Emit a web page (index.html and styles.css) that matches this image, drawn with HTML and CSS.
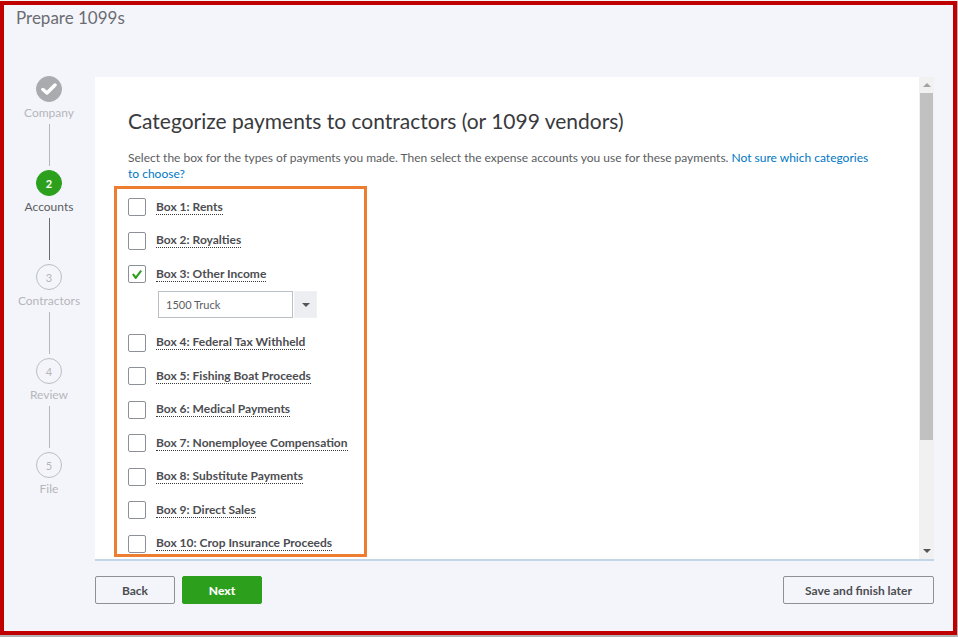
FILE: index.html
```html
<!DOCTYPE html>
<html lang="en">
    <head>
        <meta charset="UTF-8" />
        <meta name="viewport" content="width=device-width, initial-scale=1.0" />
        <title>Prepare 1099s</title>
        <link rel="stylesheet" href="styles.css">
    </head>
    <body>
        <div class="page">
            <h1 class="page-title">Prepare 1099s</h1>

            <div class="wizard">
                <!-- Steps -->
                <ol class="steps">
                    <li class="step done">
                        <span class="step-circle">
                            <svg width="16" height="14" viewBox="0 0 16 14" aria-hidden="true">
                                <path d="M2 7.5 L6 11 L14 3" fill="none" stroke="#fff" stroke-width="3.5" stroke-linecap="round" stroke-linejoin="round" />
                            </svg>
                        </span>
                        <span class="step-name">Company</span>
                    </li>
                    <li class="step current">
                        <span class="step-circle">2</span>
                        <span class="step-name">Accounts</span>
                    </li>
                    <li class="step">
                        <span class="step-circle">3</span>
                        <span class="step-name">Contractors</span>
                    </li>
                    <li class="step">
                        <span class="step-circle">4</span>
                        <span class="step-name">Review</span>
                    </li>
                    <li class="step">
                        <span class="step-circle">5</span>
                        <span class="step-name">File</span>
                    </li>
                </ol>

                <form class="main">
                    <div class="panel">
                        <div class="panel-content">
                            <h2>Categorize payments to contractors (or 1099 vendors)</h2>
                            <p class="intro">Select the box for the types of payments you made. Then select the expense accounts you use for these payments. <a href="#">Not sure which categories to choose?</a></p>

                            <!-- 1099 boxes -->
                            <div class="box-list">
                                <div class="box-item"><input type="checkbox" id="box1" /><label for="box1">Box 1: Rents</label></div>
                                <div class="box-item"><input type="checkbox" id="box2" /><label for="box2">Box 2: Royalties</label></div>
                                <div class="box-group">
                                    <div class="box-item"><input type="checkbox" id="box3" checked /><label for="box3">Box 3: Other Income</label></div>
                                    <div class="account-picker">
                                        <input type="text" value="1500 Truck" aria-label="Expense account" />
                                        <button type="button" aria-label="Show accounts"><span class="arrow-down"></span></button>
                                    </div>
                                </div>
                                <div class="box-item"><input type="checkbox" id="box4" /><label for="box4">Box 4: Federal Tax Withheld</label></div>
                                <div class="box-item"><input type="checkbox" id="box5" /><label for="box5">Box 5: Fishing Boat Proceeds</label></div>
                                <div class="box-item"><input type="checkbox" id="box6" /><label for="box6">Box 6: Medical Payments</label></div>
                                <div class="box-item"><input type="checkbox" id="box7" /><label for="box7">Box 7: Nonemployee Compensation</label></div>
                                <div class="box-item"><input type="checkbox" id="box8" /><label for="box8">Box 8: Substitute Payments</label></div>
                                <div class="box-item"><input type="checkbox" id="box9" /><label for="box9">Box 9: Direct Sales</label></div>
                                <div class="box-item"><input type="checkbox" id="box10" /><label for="box10">Box 10: Crop Insurance Proceeds</label></div>
                            </div>
                        </div>
                        <div class="scrollbar">
                            <span class="arrow-up"></span>
                            <div class="track"><div class="thumb"></div></div>
                            <span class="arrow-down"></span>
                        </div>
                    </div>

                    <div class="actions">
                        <button type="button">Back</button>
                        <button type="button" class="primary">Next</button>
                        <button type="button" class="later">Save and finish later</button>
                    </div>
                </form>
            </div>
        </div>
    </body>
</html>
```

FILE: styles.css
```css
* {
    box-sizing: border-box;
}

body {
    margin: 0;
    padding: 1px 1px 2px 0;
    font-family: Lato, "Open Sans", sans-serif;
    font-size: 12px;
    color: #393a3d;
    background: linear-gradient(#f4f4f4 1px, #b4b4b4 1px);
}

.page {
    display: flex;
    flex-direction: column;
    min-height: calc(100vh - 3px);
    border: 4px solid #c00000;
    background-color: #f4f5fa;
}

.page-title {
    margin: 0;
    padding: 2px 12px;
    font-size: 17px;
    font-weight: 400;
    line-height: 22px;
    color: #6b6c72;
}

.wizard {
    flex: 1;
    display: flex;
    padding: 46px 19px 27px 0;
}

/* Steps */
.steps {
    width: 91px;
    margin: -1px 0 0;
    padding: 0 1px 0 0;
    list-style: none;
    color: #b4b6ba;
}

.step {
    display: flex;
    flex-direction: column;
    align-items: center;
}

.step-circle {
    display: flex;
    align-items: center;
    justify-content: center;
    width: 26px;
    height: 26px;
    border: 1px solid #babec5;
    border-radius: 50%;
    font-size: 11px;
}

.step-name {
    line-height: 22px;
}

.step:not(:last-child)::after {
    content: "";
    width: 1px;
    height: 42px;
    margin-bottom: 4px;
    background-color: #b4b6ba;
}

.step.done .step-circle {
    border-color: #a9abaf;
    background-color: #a9abaf;
}

.step.current .step-circle {
    border-color: #2ca01c;
    background-color: #2ca01c;
    color: #fff;
    font-weight: 700;
}

.step.current .step-name {
    color: #5b5d61;
}

.step.current::after {
    background-color: #6b6c72;
}

/* Panel */
.main {
    flex: 1;
    display: flex;
    flex-direction: column;
}

.panel {
    flex: 1;
    display: flex;
    border-bottom: 2px solid #c5d5e8;
    background-color: #fff;
}

.panel-content {
    flex: 1;
    display: flex;
    flex-direction: column;
    align-items: flex-start;
    padding: 32px 40px 2px 19px;
}

h2 {
    margin: 0 14px 17px;
    font-size: 21px;
    font-weight: 400;
    line-height: 24px;
}

.intro {
    margin: 0 0 4px 14px;
    line-height: 16px;
    color: #5b5d61;
}

.intro a {
    color: #0077c5;
    text-decoration: none;
}

/* 1099 boxes */
.box-list {
    flex: 1;
    display: flex;
    flex-direction: column;
    justify-content: space-between;
    width: 253px;
    padding: 9px 11px 1px;
    border: 3px solid #ed7d31;
}

.box-item {
    display: flex;
    align-items: center;
    gap: 10px;
    height: 18px;
}

.box-item input {
    appearance: none;
    flex: none;
    width: 18px;
    height: 18px;
    margin: 0;
    border: 1px solid #8d9096;
    border-radius: 2px;
    background-color: #fff;
}

.box-item input:checked::before {
    content: "";
    display: block;
    width: 10px;
    height: 9px;
    margin: 4px 3px;
    background-color: #2ca01c;
    clip-path: polygon(0 50%, 18% 38%, 38% 66%, 84% 0, 100% 12%, 42% 100%, 32% 100%);
}

.box-item label {
    border-bottom: 1px dotted #393a3d;
    font-weight: 700;
    line-height: 14px;
    white-space: nowrap;
    color: #4c4d51;
}

.account-picker {
    display: flex;
    gap: 1px;
    height: 27px;
    margin: 8px 0 0 30px;
}

.account-picker input {
    width: 135px;
    padding: 0 7px;
    border: 1px solid #babec5;
    font: inherit;
    font-size: 11px;
    color: #5b5d61;
}

.account-picker button {
    display: flex;
    align-items: center;
    justify-content: center;
    width: 23px;
    padding: 0;
    border: 1px solid #f0f1f5;
    background-color: #eceef1;
}

.arrow-down,
.arrow-up {
    border: 4px solid transparent;
}

.arrow-down {
    border-top-color: #555;
    border-bottom: none;
}

.arrow-up {
    border-top: none;
    border-bottom-color: #a3a3a3;
}

.scrollbar {
    display: flex;
    flex-direction: column;
    align-items: center;
    width: 15px;
    padding: 6px 1px;
    background-color: #f1f1f1;
}

.track {
    flex: 1;
    width: 100%;
    margin: 6px 0;
}

.thumb {
    height: 77%;
    background-color: #c1c1c1;
}

/* Buttons */
.actions {
    display: flex;
    gap: 7px;
    padding-top: 15px;
}

.actions button {
    width: 80px;
    height: 28px;
    padding: 0;
    border: 1px solid #8d9096;
    border-radius: 2px;
    background-color: transparent;
    font: inherit;
    font-weight: 700;
    color: #4c4d51;
}

.actions .primary {
    border-color: #2ca01c;
    background-color: #2ca01c;
    color: #fff;
    font-weight: 900;
}

.actions .later {
    width: 151px;
    margin-left: auto;
}
```
